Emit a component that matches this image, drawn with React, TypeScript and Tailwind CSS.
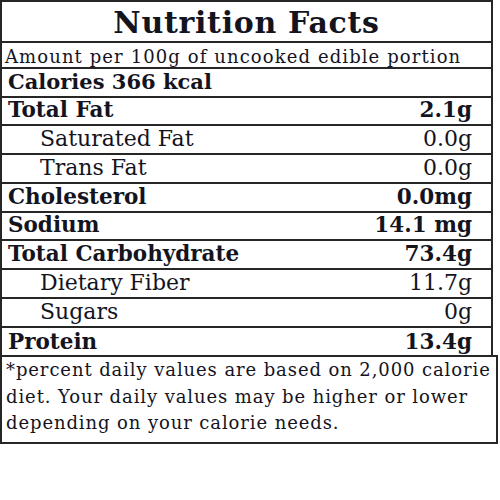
import React from "react";

type Row = {
  label: string;
  value: string;
  bold?: boolean;
  sub?: boolean;
  h: string;
};

const rows: Row[] = [
  { label: "Total Fat", value: "2.1g", bold: true, h: "h-[28px]" },
  { label: "Saturated Fat", value: "0.0g", sub: true, h: "h-[29px]" },
  { label: "Trans Fat", value: "0.0g", sub: true, h: "h-[29px]" },
  { label: "Cholesterol", value: "0.0mg", bold: true, h: "h-[29px]" },
  { label: "Sodium", value: "14.1 mg", bold: true, h: "h-[28px]" },
  { label: "Total Carbohydrate", value: "73.4g", bold: true, h: "h-[29px]" },
  { label: "Dietary Fiber", value: "11.7g", sub: true, h: "h-[29px]" },
  { label: "Sugars", value: "0g", sub: true, h: "h-[29px]" },
];

export default function App() {
  return (
    <div className="w-[500px] h-[500px] bg-white font-['DejaVu_Serif',serif] text-[#14141e]">
      {/* main table */}
      <div className="w-[493px] border-x-2 border-t-2 border-[#262626]">
        <div className="h-[41px] flex items-end justify-center border-b-2 border-[#262626]">
          <span className="text-[30px] font-bold leading-[34px] tracking-[0.7px] pb-[1px]">Nutrition Facts</span>
        </div>
        <div className="h-[26px] flex items-end pl-[3px] border-b-2 border-[#262626]">
          <span className="text-[18px] leading-[21px] tracking-[1.1px] whitespace-nowrap">
            Amount per 100g of uncooked edible portion
          </span>
        </div>
        <div className="h-[29px] flex items-end pl-[6px] border-b-2 border-[#262626]">
          <span className="text-[21px] font-bold leading-[24px] pb-[2px]">Calories 366 kcal</span>
        </div>
        {rows.map((r) => (
          <div
            key={r.label}
            className={`${r.h} flex items-end justify-between pr-[19px] border-b-2 border-[#262626] ${
              r.sub ? "pl-[38px]" : "pl-[6px]"
            }`}
          >
            <span className={`leading-[24px] pb-[2px] ${r.bold ? "text-[21.5px] font-bold" : "text-[22px]"}`}>
              {r.label}
            </span>
            <span className={`leading-[24px] pb-[2px] ${r.bold ? "text-[21.5px] font-bold" : "text-[22px]"}`}>
              {r.value}
            </span>
          </div>
        ))}
        <div className="h-[27px] flex items-end justify-between pl-[6px] pr-[19px]">
          <span className="text-[21.5px] font-bold leading-[24px] pb-[1px]">Protein</span>
          <span className="text-[21.5px] font-bold leading-[24px] pb-[1px]">13.4g</span>
        </div>
      </div>

      {/* footnote */}
      <div className="w-[498px] h-[89px] border-2 border-[#262626] pl-[4px] text-[18px] leading-[26.5px] tracking-[0.9px] whitespace-nowrap">
        <div>*percent daily values are based on 2,000 calorie</div>
        <div>diet. Your daily values may be higher or lower</div>
        <div>depending on your calorie needs.</div>
      </div>
    </div>
  );
}
